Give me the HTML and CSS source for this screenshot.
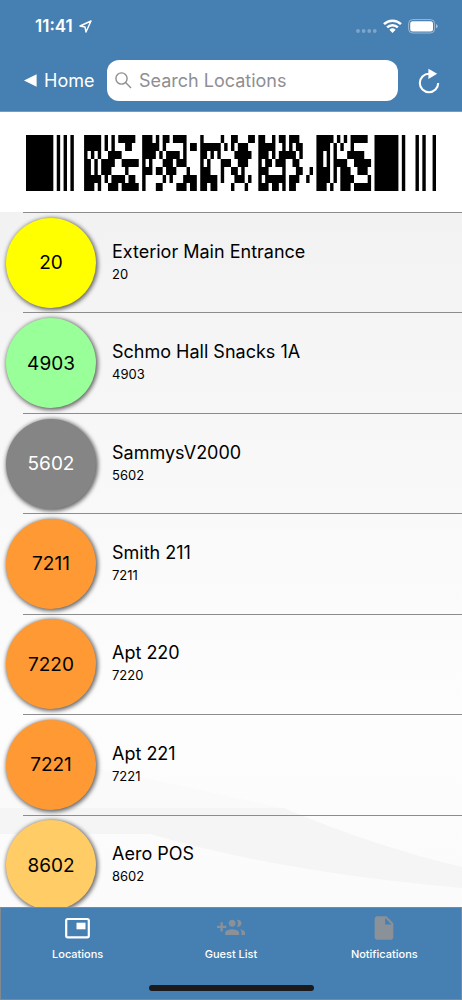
FILE: index.html
```html
<!DOCTYPE html>
<html lang="en">
<head>
<meta charset="utf-8">
<meta name="viewport" content="width=device-width, initial-scale=1">
<title>Locations</title>
<link rel="stylesheet" href="styles.css">
</head>
<body>
<div class="app">
  <header class="header">
    <div class="status">
      <div class="status-left">
        <span class="time">11:41</span>
        <svg class="arrow" viewBox="0 0 13 13" width="13" height="13" aria-hidden="true"><path d="M12 1 1 6l5 1 1 5z" fill="none" stroke="currentColor" stroke-width="1.4" stroke-linejoin="round"/></svg>
      </div>
      <div class="status-right">
        <svg viewBox="0 0 21 14" width="21" height="14" aria-hidden="true"><g fill="#fff" opacity=".3"><circle cx="2" cy="12" r="1.9"/><circle cx="7.6" cy="12" r="1.9"/><circle cx="13.2" cy="12" r="1.9"/><circle cx="18.8" cy="12" r="1.9"/></g></svg>
        <svg viewBox="0 0 19 14" width="19" height="14" aria-hidden="true"><g fill="none" stroke="#fff" stroke-width="2.5"><path d="M1 5.1a12.2 12.2 0 0 1 17 0"/><path d="M4.1 8.3a7.8 7.8 0 0 1 10.8 0"/></g><path d="M6.4 10.7a4.5 4.5 0 0 1 6.2 0L9.5 13.9z" fill="#fff"/></svg>
        <svg viewBox="0 0 30 15" width="30" height="15" aria-hidden="true"><rect x=".6" y=".6" width="26" height="13.4" rx="4" fill="none" stroke="#fff" stroke-opacity=".45"/><rect x="2.2" y="2.2" width="22.8" height="10.2" rx="2.5" fill="#fff"/><path d="M28 5v4.6q1.7-.8 1.7-2.3T28 5z" fill="#fff" opacity=".5"/></svg>
      </div>
    </div>
    <div class="toolbar">
      <button class="home" type="button">
        <svg viewBox="0 0 13 13" width="13" height="13" aria-hidden="true"><path d="M0 6.5 12.6.3v12.4z" fill="currentColor"/></svg>
        <span>Home</span>
      </button>
      <label class="search">
        <svg viewBox="0 0 17 17" width="17" height="17" aria-hidden="true"><g fill="none" stroke="#8e8e93" stroke-width="1.4"><circle cx="6.500" cy="6.500" r="5.600"/><path d="m10.600 10.600 5.400 5.400"/></g></svg>
        <input class="search-input" type="search" placeholder="Search Locations" aria-label="Search Locations">
      </label>
      <button class="refresh" type="button" aria-label="Refresh">
        <svg viewBox="0 0 22 26" width="22" height="26" aria-hidden="true"><path d="M11 5.8a9.2 9.2 0 1 0 9.2 9.2" fill="none" stroke="#fff" stroke-width="2.1"/><path d="M10.4.8 19.2 5.700 10.400 11z" fill="#fff"/></svg>
      </button>
    </div>
  </header>
  <main class="content">
    <div class="barcode">
      <svg class="bars" viewBox="0 0 120 7" preserveAspectRatio="none" role="img" aria-label="Barcode">
        <path d="M0 .5h120" stroke-dasharray="8 1 1 1 1 1 1 3 5 1 1 1 1 1 5 2 3 1 1 1 2 1 4 4 1 5 1 2 2 3 2 1 2 2 1 1 2 1 3 5 5 1 1 1 1 1 5 2 7 1 1 3 1 1 1 2 1 9"/>
        <path d="M0 1.500h120" stroke-dasharray="8 1 1 1 1 1 1 3 5 1 1 1 1 3 2 3 5 1 1 5 1 1 2 1 6 1 1 1 1 1 3 3 5 2 1 1 1 1 2 4 4 1 1 1 1 2 1 6 7 1 1 3 1 1 1 2 1 9"/>
        <path d="M0 2.500h120" stroke-dasharray="8 1 1 1 1 1 1 3 1 1 1 1 1 2 4 6 4 1 1 1 4 1 1 4 2 1 1 1 1 4 5 2 3 1 1 1 5 1 1 4 2 1 1 1 1 3 5 3 7 1 1 3 1 1 1 2 1 9"/>
        <path d="M0 3.500h120" stroke-dasharray="8 1 1 1 1 1 1 3 2 1 1 1 4 2 5 1 1 1 1 3 3 1 3 4 1 1 1 3 3 2 3 3 1 1 2 1 3 2 2 5 2 1 1 1 4 2 5 1 7 1 1 3 1 1 1 2 1 9"/>
        <path d="M0 4.500h120" stroke-dasharray="8 1 1 1 1 1 1 3 2 1 1 1 3 4 1 4 3 1 2 1 3 3 1 3 3 3 1 2 2 1 1 4 3 4 1 3 2 2 1 1 4 1 1 1 3 2 3 2 7 1 1 3 1 1 1 2 1 9"/>
        <path d="M0 5.500h120" stroke-dasharray="8 1 1 1 1 1 1 3 5 1 1 1 4 1 2 2 1 5 1 1 1 3 4 1 5 1 1 3 3 1 1 2 1 1 6 1 3 2 1 2 4 1 1 1 4 4 1 1 7 1 1 3 1 1 1 2 1 9"/>
        <path d="M0 6.500h120" stroke-dasharray="8 1 1 1 1 1 1 3 3 1 1 2 3 1 5 1 1 3 2 4 3 1 2 1 2 1 2 4 1 3 1 3 3 1 2 1 1 1 2 6 3 1 1 2 3 1 5 1 7 1 1 3 1 1 1 2 1 9"/>
      </svg>
    </div>
    <ul class="list">
      <li class="row"><a class="link" href="#20"><span class="badge yellow">20</span><span class="text"><span class="name">Exterior Main Entrance</span><span class="code">20</span></span></a></li>
      <li class="row"><a class="link" href="#4903"><span class="badge green">4903</span><span class="text"><span class="name">Schmo Hall Snacks 1A</span><span class="code">4903</span></span></a></li>
      <li class="row"><a class="link" href="#5602"><span class="badge gray">5602</span><span class="text"><span class="name">SammysV2000</span><span class="code">5602</span></span></a></li>
      <li class="row"><a class="link" href="#7211"><span class="badge orange">7211</span><span class="text"><span class="name">Smith 211</span><span class="code">7211</span></span></a></li>
      <li class="row"><a class="link" href="#7220"><span class="badge orange">7220</span><span class="text"><span class="name">Apt 220</span><span class="code">7220</span></span></a></li>
      <li class="row"><a class="link" href="#7221"><span class="badge orange">7221</span><span class="text"><span class="name">Apt 221</span><span class="code">7221</span></span></a></li>
      <li class="row"><a class="link" href="#8602"><span class="badge amber">8602</span><span class="text"><span class="name">Aero POS</span><span class="code">8602</span></span></a></li>
    </ul>
    <svg class="waves" viewBox="0 0 462 140" preserveAspectRatio="none" aria-hidden="true">
      <path d="M0 0h90Q190 20 290 43H0z" fill="#fafafa"/>
      <path d="M0 41h284Q370 78 462 100v21Q280 105 150 67H0z" fill="#f5f5f5"/>
    </svg>
  </main>
  <footer class="footer">
    <nav class="tabs">
      <button class="tab active" type="button">
        <svg viewBox="0 0 28 28" width="28" height="28" aria-hidden="true"><rect x="2.200" y="5" width="22.600" height="18.300" rx="1.500" fill="none" stroke="currentColor" stroke-width="2.200"/><path d="M12.500 8.700h9v6.600h-9z" fill="currentColor"/></svg>
        <span>Locations</span>
      </button>
      <button class="tab" type="button">
        <svg viewBox="0 0 24 24" width="28" height="28" aria-hidden="true"><path fill="currentColor" d="M8 10H5V7H3v3H0v2h3v3h2v-3h3v-2zm10 1c1.660 0 2.990-1.340 2.990-3S19.660 5 18 5c-.32 0-.63.05-.91.14.57.81.9 1.790.9 2.860s-.34 2.040-.9 2.860c.28.09.59.14.91.14zm-5 0c1.660 0 2.990-1.340 2.990-3S14.660 5 13 5s-3 1.340-3 3 1.340 3 3 3zm6.620 2.160c.83.73 1.380 1.660 1.380 2.840v2h3v-2c0-1.540-2.370-2.490-4.380-2.840zM13 13c-2 0-6 1-6 3v2h12v-2c0-2-4-3-6-3z"/></svg>
        <span>Guest List</span>
      </button>
      <button class="tab" type="button">
        <svg viewBox="0 0 24 24" width="28" height="28" aria-hidden="true"><path fill="currentColor" d="M6 2c-1.100 0-2 .9-2 2v16c0 1.100.9 2 2 2h12c1.100 0 2-.9 2-2V8l-6-6H6zm7 7V3.500L18.500 9H13z"/></svg>
        <span>Notifications</span>
      </button>
    </nav>
    <div class="indicator"></div>
  </footer>
</div>
</body>
</html>
```
FILE: styles.css
```css
* { box-sizing: border-box; }

body {
  margin: 0;
  font-family: Inter, "Liberation Sans", sans-serif;
  color: #000;
}

button {
  padding: 0;
  border: 0;
  background: none;
  font: inherit;
  color: inherit;
}

svg { display: block; }

.app {
  display: flex;
  flex-direction: column;
  height: 100vh;
}

.header {
  background: #467fb2;
  color: #fff;
  border-bottom: 1px solid #7a9ab8;
}

.status {
  display: flex;
  justify-content: space-between;
  align-items: center;
  padding: 14px 24px 0 35px;
  height: 38px;
}

.status-left {
  display: flex;
  align-items: center;
  gap: 6px;
}

.time {
  font-size: 17px;
  font-weight: 600;
  line-height: 24px;
}

.status-right {
  display: flex;
  align-items: center;
  gap: 6px;
}

.toolbar {
  display: flex;
  align-items: center;
  padding: 22px 22px 10px 24px;
}

.home {
  display: flex;
  align-items: center;
  gap: 7px;
  width: 83px;
  font-size: 18px;
  line-height: 24px;
}

.search {
  display: flex;
  flex: 1;
  align-items: center;
  gap: 7px;
  min-width: 0;
  height: 41px;
  padding: 0 8px;
  border-radius: 12px;
  background: #fff;
}

.search-input {
  flex: 1;
  min-width: 0;
  padding: 0;
  border: 0;
  outline: 0;
  background: none;
  font: inherit;
  font-size: 18px;
  line-height: 24px;
}

.search-input::placeholder { color: #8e8e93; opacity: 1; }

.refresh { margin-left: 20px; }

.content {
  position: relative;
  flex: 1;
  min-height: 0;
  overflow: hidden;
  background: linear-gradient(#fff 100px, #f2f2f2 100px, #f8f8f8 350px, #fdfdfd 600px, #fbfbfb);
}

.barcode {
  height: 100px;
  padding: 23px 26px 21px;
}

.bars {
  width: 100%;
  height: 56px;
  fill: none;
  stroke: #000;
  stroke-width: 1;
}

.list {
  display: grid;
  grid-auto-rows: 1fr;
  height: 703px;
  position: relative;
  z-index: 1;
  margin: 0;
  padding: 0;
  list-style: none;
}

.row {
  background: linear-gradient(#8c8c8c, #8c8c8c) 23px 0 / 100% 1px no-repeat;
}

.link {
  display: flex;
  align-items: center;
  gap: 16px;
  height: 100%;
  padding: 1px 6px 0;
  color: inherit;
  text-decoration: none;
}

.badge {
  display: flex;
  flex: none;
  align-items: center;
  justify-content: center;
  width: 90px;
  height: 90px;
  border-radius: 50%;
  font-size: 19px;
  box-shadow: 1px 1px 4px 1px rgba(0, 0, 0, 0.6);
}

.yellow { background: #ffff00; }
.green { background: #99ff99; }
.gray { background: #858585; color: #fff; }
.orange { background: #ff9933; }
.amber { background: #ffcc66; }

.text {
  display: flex;
  flex-direction: column;
  padding-bottom: 2px;
}

.name {
  font-size: 18px;
  line-height: 24px;
}

.code {
  font-size: 13px;
  line-height: 20px;
}

.waves {
  position: absolute;
  left: 0;
  bottom: 0;
  width: 100%;
  height: 140px;
}

.footer {
  display: flex;
  flex-direction: column;
  align-items: center;
  justify-content: space-between;
  height: 93px;
  padding: 6px 0 8px;
  border: 1px solid #808890;
  background: #467fb2;
}

.tabs {
  display: grid;
  grid-template-columns: repeat(3, 1fr);
  width: 100%;
}

.tab {
  display: flex;
  flex-direction: column;
  align-items: center;
  gap: 4px;
  font-size: 11px;
  font-weight: 500;
  line-height: 16px;
  color: #fff;
}

.tab svg { color: #8a9199; }
.tab.active svg { color: #fff; }

.indicator {
  width: 165px;
  height: 6px;
  border-radius: 3px;
  background: #1a1a1a;
}
```
